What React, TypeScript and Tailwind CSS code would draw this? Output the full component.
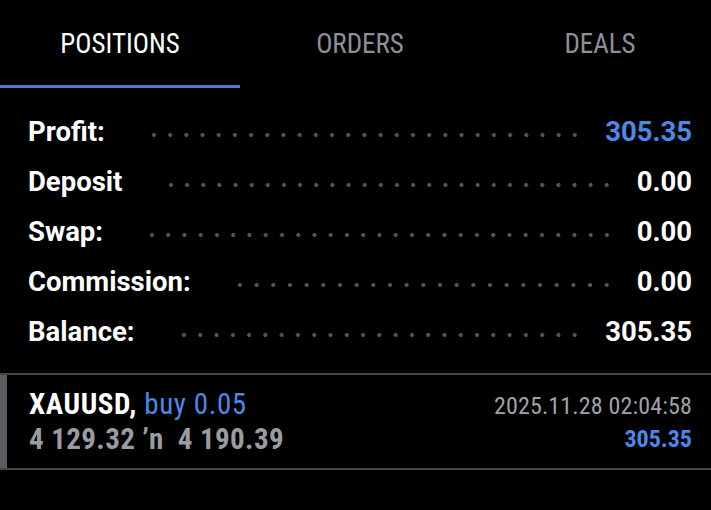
const tabs = [
  { name: "POSITIONS", active: true },
  { name: "ORDERS", active: false },
  { name: "DEALS", active: false },
];

const summary = [
  { label: "Profit:", value: "305.35", blue: true },
  { label: "Deposit", value: "0.00" },
  { label: "Swap:", value: "0.00" },
  { label: "Commission:", value: "0.00" },
  { label: "Balance:", value: "305.35" },
];

const condensed = "font-['Roboto_Condensed','Roboto',sans-serif] [font-stretch:75%]";

export default function App() {
  return (
    <div className="w-[711px] h-[510px] bg-black overflow-hidden font-['Roboto',sans-serif]">
      {/* Tabs */}
      <div className="flex h-[88px]">
        {tabs.map((t) => (
          <div
            key={t.name}
            className={`w-[240px] shrink-0 flex items-center justify-center pt-[3px] text-[27px] ${condensed} ${
              t.active ? "text-white border-b-[3px] border-[#3f7fe0]" : "text-[#8d9096] border-b-[3px] border-transparent"
            }`}
          >
            {t.name}
          </div>
        ))}
      </div>

      {/* Summary */}
      <div className="pt-[19px] pl-[28px] pr-[19px]">
        {summary.map((r) => (
          <div key={r.label} className="flex items-center h-[50px] text-[27.5px] font-bold leading-[50px]">
            <span className="text-white">{r.label}</span>
            <div className="flex-1 ml-[41px] mr-[22px] h-[6px] mt-[5px] bg-[radial-gradient(circle,#55565a_1.7px,transparent_2.3px)] bg-[length:16px_6px] bg-repeat-space" />
            <span className={r.blue ? "text-[#4a8ae6]" : "text-white"}>{r.value}</span>
          </div>
        ))}
      </div>

      {/* Position row */}
      <div className="mt-[16px] flex border-y-2 border-[#46474d]">
        <div className="w-[7px] bg-[#5a5b60]" />
        <div className={`flex-1 flex justify-between pl-[22px] pr-[19px] pt-[12px] pb-[11px] ${condensed}`}>
          <div className="flex flex-col">
            <div className="text-[29px] leading-[35px] tracking-[0.6px]">
              <span className="text-white font-bold">XAUUSD,</span>{" "}
              <span className="text-[#4a8ae6]">buy 0.05</span>
            </div>
            <div className="text-[29px] leading-[35px] tracking-[0.4px] text-[#9a9ca2] font-bold">
              4 129.32 ʼn&nbsp; 4 190.39
            </div>
          </div>
          <div className="flex flex-col items-end pt-[3px]">
            <div className="text-[24px] leading-[33px] tracking-[0.15px] text-[#a0a2a8]">2025.11.28 02:04:58</div>
            <div className="text-[24px] leading-[33px] text-[#4a8ae6] font-bold">305.35</div>
          </div>
        </div>
      </div>
    </div>
  );
}
